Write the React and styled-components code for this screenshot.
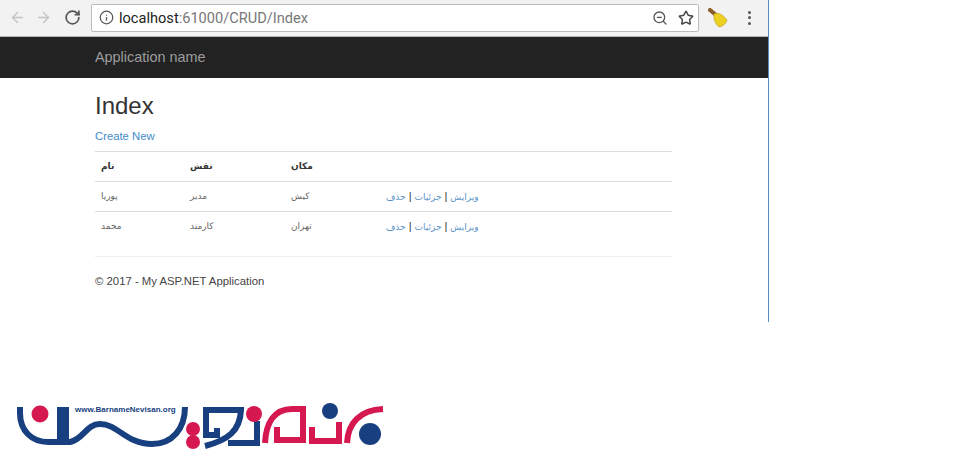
import styled, { createGlobalStyle } from "styled-components";
import { ArrowLeft, ArrowRight, RotateCw, Info, ZoomOut, Star } from "lucide-react";

const GlobalStyle = createGlobalStyle`
  html, body {
    margin: 0;
    background: #fff;
  }
  body {
    font-family: "Liberation Sans", Arial, sans-serif;
    color: #333;
    overflow: hidden;
  }
`;

const Page = styled.div`
  width: 961px;
  height: 452px;
`;

const Browser = styled.div`
  width: 769px;
  height: 322px;
  box-sizing: border-box;
  border-right: 1px solid #5a8fc4;
`;

const Toolbar = styled.div`
  height: 37px;
  box-sizing: border-box;
  display: flex;
  align-items: center;
  padding: 0 0 1px 9px;
  background: #f2f2f2;
  border-bottom: 1px solid #b4b4b4;
`;

const NavIcon = styled.span`
  display: flex;
  width: ${(p) => p.$w}px;
  color: ${(p) => p.$color};
`;

const Omnibox = styled.div`
  width: 608px;
  height: 28px;
  box-sizing: border-box;
  margin-left: 10px;
  display: flex;
  align-items: center;
  padding: 0 4px 0 7px;
  background: #fff;
  border: 1px solid #bcbcbc;
  border-radius: 2px;
`;

const Url = styled.div`
  flex: 1;
  margin-left: 5px;
  font-family: Roboto, sans-serif;
  font-size: 14.6px;
  color: #777;
  b {
    font-weight: 400;
    color: #222;
  }
`;

const OmniIcon = styled.span`
  display: flex;
  margin-left: ${(p) => p.$gap}px;
  color: #555;
`;

const Extras = styled.div`
  display: flex;
  align-items: center;
  margin-left: 9px;
  gap: 20px;
`;

const Dots = styled.div`
  display: flex;
  flex-direction: column;
  gap: 2.5px;
  i {
    width: 3px;
    height: 3px;
    border-radius: 50%;
    background: #555;
  }
`;

const Navbar = styled.div`
  height: 41px;
  box-sizing: border-box;
  display: flex;
  align-items: center;
  padding: 0 0 2px 95px;
  background: #222;
  color: #9d9d9d;
  font-size: 14.4px;
`;

const Content = styled.div`
  width: 577px;
  margin-left: 95px;
`;

const Title = styled.h2`
  margin: 15px 0 0;
  font-size: 24px;
  font-weight: 400;
  line-height: 26px;
  color: #333;
`;

const CreateLink = styled.a`
  display: block;
  margin-top: 9px;
  font-size: 11.3px;
  line-height: 17px;
  color: #428bca;
`;

const Table = styled.table`
  width: 100%;
  margin-top: 6px;
  border-collapse: collapse;
  table-layout: fixed;
  font-family: "DejaVu Sans", sans-serif;
  font-size: 9px;
`;

const Cell = styled.td`
  height: 27px;
  padding: 0 6px 2px;
  border-top: 1px solid #ddd;
  text-align: left;
  vertical-align: middle;
  width: ${(p) => p.$w || "auto"};
  color: #666;
`;

const HeadCell = styled(Cell).attrs({ as: "th" })`
  font-weight: 700;
  color: #333;
`;

const ActionLink = styled.a`
  color: #5b93c7;
`;

const Sep = styled.span`
  margin: 0 3px;
  font-family: "Liberation Sans", sans-serif;
  font-size: 11px;
  color: #333;
`;

const Rule = styled.hr`
  margin: 15px 0 0;
  border: 0;
  border-top: 1px solid #eee;
`;

const Footer = styled.p`
  margin: 16px 0 0;
  font-size: 11.35px;
  line-height: 16px;
  color: #444;
`;

const LogoWrap = styled.div`
  margin: 81px 0 0 15px;
  width: 370px;
  height: 48px;
`;

const BroomIcon = () => (
  <svg width="20" height="20" viewBox="0 0 20 20">
    <path d="M2 2 L8 7" stroke="#8a5a2b" strokeWidth="4" strokeLinecap="round" />
    <path d="M6 6 Q12 3 19 12 Q17 18 11 19 Q5 14 6 6 Z" fill="#ecd022" stroke="#b89a10" strokeWidth="0.6" />
  </svg>
);

const Logo = () => (
  <svg width="370" height="48" viewBox="15 404 370 48">
    <g fill="none" stroke="#183f80" strokeWidth="6">
      <path d="M20 408 V414 C20 432 32 443 48 443 H60 V408" />
      <path d="M66 408 V443 H70 C84 440 86 425 100 425 C118 425 126 445 152 445 C172 445 185 430 185 408" />
      <path d="M217 429 V436 H206 V411 H241 C240 432 228 441 205 447" />
      <path d="M228 444 H257 V422" />
    </g>
    <g fill="none" stroke="#d5184f" strokeWidth="6">
      <path d="M265 444 C266 424 274 410 292 410 H303 V441 H277 V428" />
      <path d="M312 428 V442 H339 V423" />
      <path d="M347 444 C348 424 360 411 383 410" />
    </g>
    <circle cx="40" cy="415" r="8.5" fill="#d5184f" />
    <circle cx="193" cy="430" r="7" fill="#d5184f" />
    <circle cx="193" cy="443" r="7" fill="#d5184f" />
    <circle cx="254" cy="415" r="8" fill="#d5184f" />
    <circle cx="330" cy="412" r="8" fill="#183f80" />
    <circle cx="370" cy="435" r="11" fill="#183f80" />
    <text x="75" y="413" fontFamily="Liberation Sans, sans-serif" fontSize="8" fontWeight="700" fill="#183f80">
      www.BarnameNevisan.org
    </text>
  </svg>
);

const rows = [
  ["پوریا", "مدیر", "کیش"],
  ["محمد", "کارمند", "تهران"],
];

const App = () => {
  return (
    <Page>
      <GlobalStyle />
      <Browser>
        <Toolbar>
          <NavIcon $w={26} $color="#c4c4c4"><ArrowLeft size={17} /></NavIcon>
          <NavIcon $w={29} $color="#c4c4c4"><ArrowRight size={17} /></NavIcon>
          <NavIcon $w={17} $color="#555"><RotateCw size={17} strokeWidth={2.4} /></NavIcon>
          <Omnibox>
            <Info size={15} color="#555" />
            <Url><b>localhost</b>:61000/CRUD/Index</Url>
            <OmniIcon $gap={6}><ZoomOut size={16} /></OmniIcon>
            <OmniIcon $gap={10}><Star size={16} strokeWidth={2.2} color="#444" /></OmniIcon>
          </Omnibox>
          <Extras>
            <BroomIcon />
            <Dots><i /><i /><i /></Dots>
          </Extras>
        </Toolbar>
        <Navbar>Application name</Navbar>
        <Content>
          <Title>Index</Title>
          <CreateLink>Create New</CreateLink>
          <Table>
            <thead>
              <tr>
                <HeadCell $w="77px">نام</HeadCell>
                <HeadCell $w="89px">نقش</HeadCell>
                <HeadCell $w="83px">مکان</HeadCell>
                <HeadCell />
              </tr>
            </thead>
            <tbody>
              {rows.map((r) => (
                <tr key={r[0]}>
                  <Cell>{r[0]}</Cell>
                  <Cell>{r[1]}</Cell>
                  <Cell>{r[2]}</Cell>
                  <Cell>
                    <ActionLink>ویرایش</ActionLink>
                    <Sep>|</Sep>
                    <ActionLink>جزئیات</ActionLink>
                    <Sep>|</Sep>
                    <ActionLink>حذف</ActionLink>
                  </Cell>
                </tr>
              ))}
            </tbody>
          </Table>
          <Rule />
          <Footer>© 2017 - My ASP.NET Application</Footer>
        </Content>
      </Browser>
      <LogoWrap><Logo /></LogoWrap>
    </Page>
  );
};

export default App;
